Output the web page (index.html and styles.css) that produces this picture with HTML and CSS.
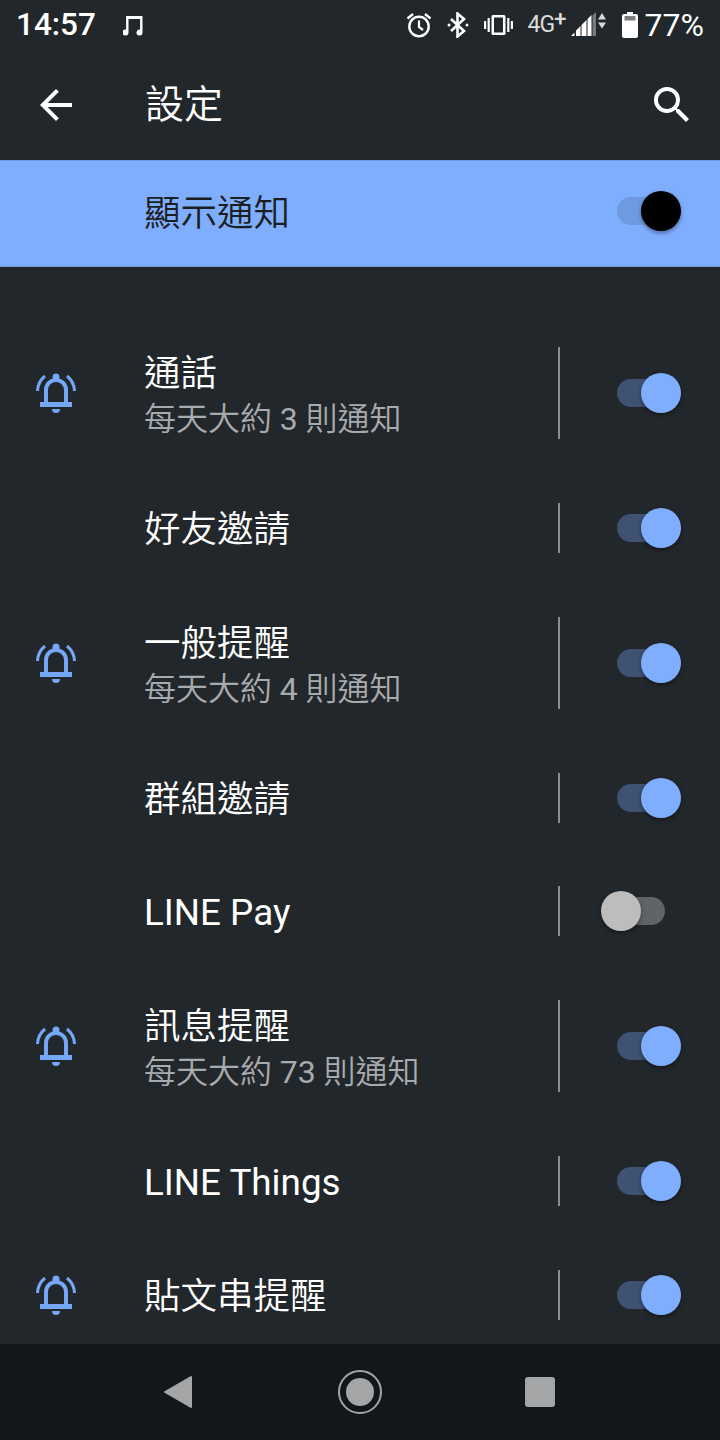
FILE: index.html
```html
<!DOCTYPE html>
<html lang="zh-Hant">

<head>
  <meta charset="UTF-8" />
  <title>設定</title>
  <link rel="stylesheet" href="styles.css">
</head>

<body>
  <!-- Status bar -->
  <div class="status-bar">
    <span class="clock">14:57</span>
    <svg class="ic-note" width="22" height="22" viewBox="0 0 22 22"><path d="M4 2h17v16.500a3 3 0 1 1-2.400-2.900V5H7v13.500a3 3 0 1 1-2.400-2.900V2z" fill="#fff" transform="translate(-1.500 0)"/></svg>
    <span class="status-right">
      <svg class="ic-alarm" width="26" height="26" viewBox="0 0 26 26" fill="none" stroke="#fff">
        <circle cx="13" cy="14.500" r="9.700" stroke-width="2.400"/>
        <path d="M13 8.500v6.500l4 3" stroke-width="2.200"/>
        <path d="M1.500 6.500L7 2M24.500 6.500L19 2" stroke-width="2.400"/>
      </svg>
      <svg class="ic-bt" width="22" height="26" viewBox="0 0 22 26" fill="none" stroke="#fff">
        <path d="M4 7l13 12-6.500 5.500V1.500L17 7 4 19" stroke-width="2.600"/>
        <circle cx="2" cy="13" r="1.500" fill="#fff" stroke="none"/>
        <circle cx="20" cy="13" r="1.500" fill="#fff" stroke="none"/>
      </svg>
      <svg class="ic-vib" width="29" height="20" viewBox="0 0 29 20" fill="#fff">
        <path d="M9 0h11a1.500 1.500 0 0 1 1.500 1.500v17A1.500 1.500 0 0 1 20 20H9a1.500 1.500 0 0 1-1.500-1.500v-17A1.500 1.500 0 0 1 9 0zm1 2.400v15.200h9V2.400h-9z"/>
        <rect x="3.600" y="3" width="2.200" height="14" rx=".5"/>
        <rect x="23.200" y="3" width="2.200" height="14" rx=".5"/>
        <rect x="0" y="6" width="2.200" height="8" rx=".5"/>
        <rect x="26.800" y="6" width="2.200" height="8" rx=".5"/>
      </svg>
      <span class="net">4G<sup>+</sup></span>
      <svg class="ic-signal" width="35" height="26" viewBox="0 0 35 26">
        <path d="M21.500 24V3.500L25 0v24z" fill="#77797b"/>
        <path d="M0 24l3.500-3.500V24zM5 24v-5.500l4.500-4.500v10zM10.500 24V13l5-5v16zM16.500 24V7l4-4v21z" fill="#fff"/>
        <path d="M31 1l4 6.500h-8zM31 16.500l4-6h-8z" fill="#d8d8d8"/>
      </svg>
      <svg class="ic-batt" width="16" height="26" viewBox="0 0 16 26">
        <path fill="#fff" d="M5 0h6v2h3a2 2 0 0 1 2 2v20a2 2 0 0 1-2 2H2a2 2 0 0 1-2-2V4a2 2 0 0 1 2-2h3z"/>
        <rect x="2.500" y="4" width="11" height="4.500" fill="#7c7e80"/>
      </svg>
      <span class="battery">77%</span>
    </span>
  </div>

  <!-- App bar -->
  <div class="app-bar">
    <svg class="back" width="48" height="48" viewBox="0 0 24 24"><path fill="#fff" d="M20 11H7.830l5.590-5.590L12 4l-8 8 8 8 1.410-1.410L7.830 13H20v-2z"/></svg>
    <span class="app-title">設定</span>
    <svg class="search" width="48" height="48" viewBox="0 0 24 24"><path fill="#fff" d="M15.500 14h-.790l-.280-.270A6.470 6.470 0 0 0 16 9.500 6.500 6.500 0 1 0 9.500 16c1.610 0 3.090-.590 4.230-1.570l.270.280v.790l5 4.990L20.490 19l-4.990-5zm-6 0C7.010 14 5 11.990 5 9.500S7.010 5 9.500 5 14 7.010 14 9.500 11.990 14 9.500 14z"/></svg>
  </div>

  <!-- Master toggle -->
  <div class="master">
    <span class="master-title">顯示通知</span>
    <span class="switch on master-switch"><i class="track"></i><i class="knob"></i></span>
  </div>

  <!-- Channels -->
  <div class="list">
    <div class="row tall">
      <svg class="bell" viewBox="0 0 48 48"><use href="#bell"/></svg>
      <div class="text two"><div class="title">通話</div><div class="sub">每天大約 <span class="num">3</span> 則通知</div></div>
      <i class="divider"></i>
      <span class="switch on"><i class="track"></i><i class="knob"></i></span>
    </div>
    <div class="row">
      <span class="bell"></span>
      <div class="text"><div class="title">好友邀請</div></div>
      <i class="divider"></i>
      <span class="switch on"><i class="track"></i><i class="knob"></i></span>
    </div>
    <div class="row tall">
      <svg class="bell" viewBox="0 0 48 48"><use href="#bell"/></svg>
      <div class="text two"><div class="title">一般提醒</div><div class="sub">每天大約 <span class="num">4</span> 則通知</div></div>
      <i class="divider"></i>
      <span class="switch on"><i class="track"></i><i class="knob"></i></span>
    </div>
    <div class="row">
      <span class="bell"></span>
      <div class="text"><div class="title">群組邀請</div></div>
      <i class="divider"></i>
      <span class="switch on"><i class="track"></i><i class="knob"></i></span>
    </div>
    <div class="row">
      <span class="bell"></span>
      <div class="text"><div class="title latin">LINE Pay</div></div>
      <i class="divider"></i>
      <span class="switch"><i class="track"></i><i class="knob"></i></span>
    </div>
    <div class="row tall">
      <svg class="bell" viewBox="0 0 48 48"><use href="#bell"/></svg>
      <div class="text two"><div class="title">訊息提醒</div><div class="sub">每天大約 <span class="num">73</span> 則通知</div></div>
      <i class="divider"></i>
      <span class="switch on"><i class="track"></i><i class="knob"></i></span>
    </div>
    <div class="row">
      <span class="bell"></span>
      <div class="text"><div class="title latin">LINE Things</div></div>
      <i class="divider"></i>
      <span class="switch on"><i class="track"></i><i class="knob"></i></span>
    </div>
    <div class="row">
      <svg class="bell" viewBox="0 0 48 48"><use href="#bell"/></svg>
      <div class="text"><div class="title">貼文串提醒</div></div>
      <i class="divider"></i>
      <span class="switch on"><i class="track"></i><i class="knob"></i></span>
    </div>
  </div>

  <!-- Nav bar -->
  <div class="nav-bar">
    <svg width="30" height="34" viewBox="0 0 30 34" class="nav-back"><path fill="#a4a5a7" stroke="#a4a5a7" stroke-width="2" stroke-linejoin="round" d="M28 2v30L2 17z"/></svg>
    <span class="nav-home"><i></i></span>
    <span class="nav-square"></span>
  </div>

  <!-- Bell symbol -->
  <svg class="defs" width="0" height="0">
    <symbol id="bell" viewBox="0 0 48 48">
      <g fill="none" stroke="#75a7f6">
        <path d="M14 34V21a10 10 0 0 1 20 0v13" stroke-width="4"/>
        <path d="M5.500 22A20 20 0 0 1 13 7M42.500 22A20 20 0 0 0 35 7" stroke-width="3"/>
      </g>
      <g fill="#75a7f6">
        <circle cx="24" cy="8" r="3.500"/>
        <rect x="8" y="33" width="32" height="5"/>
        <path d="M20 40h8a4 4 0 0 1-8 0z"/>
      </g>
    </symbol>
  </svg>
</body>

</html>
```

FILE: styles.css
```css
:root {
  --bg: #22272b;
  --accent: #80aeff;
  --nav: #14171a;
  --sans: Roboto, "Noto Sans CJK TC", sans-serif;
}

body {
  margin: 0;
  height: 1440px;
  overflow: hidden;
  display: flex;
  flex-direction: column;
  background: var(--bg);
  color: #fff;
  font-family: var(--sans);
}

i {
  display: block;
}

.defs {
  position: absolute;
}

/* status bar */
.status-bar {
  height: 52px;
  flex: none;
  box-sizing: border-box;
  display: flex;
  align-items: center;
  padding: 0 16px 2px 16px;
}

.clock {
  font-size: 31.5px;
  font-weight: 500;
  line-height: 48px;
}

.ic-note {
  margin-left: 27px;
}

.status-right {
  margin-left: auto;
  display: flex;
  align-items: center;
}

.ic-bt,
.ic-vib {
  margin-left: 15px;
}

.net {
  margin-left: 15px;
  width: 38px;
  font-size: 23px;
  letter-spacing: -1px;
  line-height: 30px;
  color: #dcdcdc;
  white-space: nowrap;
}

.net sup {
  font-size: 22px;
  font-weight: 500;
  line-height: 0;
  vertical-align: 6px;
}

.ic-signal {
  margin-left: 5px;
}

.ic-batt {
  margin-left: 16px;
}

.battery {
  margin-left: 7px;
  font-size: 32px;
  line-height: 48px;
}

/* app bar */
.app-bar {
  height: 108px;
  flex: none;
  box-sizing: border-box;
  display: flex;
  align-items: center;
  padding: 0 24px 2px 32px;
}

.app-title {
  margin-left: 65px;
  font-size: 39px;
  font-weight: 350;
  line-height: 50px;
}

.search {
  margin-left: auto;
}

/* master toggle */
.master {
  height: 107px;
  flex: none;
  box-sizing: border-box;
  display: flex;
  align-items: center;
  padding-left: 144px;
  background: var(--accent);
  border-top: 1px solid #6f9ae0;
  border-bottom: 1px solid #6f9ae0;
  color: #1c1f22;
}

.master-title {
  font-size: 36.5px;
  font-weight: 350;
  line-height: 50px;
}

.master-switch {
  width: 160px;
  margin-left: auto;
  margin-bottom: 5px;
}

/* channel rows */
.list {
  flex: 1;
  min-height: 0;
  overflow: hidden;
  padding-top: 48px;
}

.row {
  display: flex;
  align-items: stretch;
  padding: 31.9px 0;
}

.row.tall {
  padding: 32px 0;
}

.bell {
  flex: none;
  width: 48px;
  height: 48px;
  margin: auto 64px auto 32px;
}

.text {
  flex: 1;
  min-width: 0;
}

.title {
  font-size: 36.5px;
  font-weight: 350;
  line-height: 50px;
  padding-top: 2px;
  margin-bottom: -2px;
}

.title.latin {
  font-size: 36.8px;
  font-weight: 400;
}

.two .title {
  line-height: 46px;
  padding-top: 4px;
  margin-bottom: 0;
}

.sub {
  font-size: 32px;
  font-weight: 350;
  line-height: 46px;
  margin: -1px 0 -3px;
  color: #a8abad;
}

.num {
  font-weight: 400;
}

.divider {
  flex: none;
  width: 2px;
  background: #8a8c8e;
}

/* switches */
.switch {
  position: relative;
  flex: none;
  width: 160px;
  min-height: 50px;
  align-self: center;
}

.track {
  position: absolute;
  left: 57px;
  top: 50%;
  width: 48px;
  height: 28px;
  margin-top: -14px;
  border-radius: 14px;
  background: #5f6467;
}

.knob {
  position: absolute;
  left: 41px;
  top: 50%;
  width: 40px;
  height: 40px;
  margin-top: -20px;
  border-radius: 50%;
  background: #bdbdbd;
  box-shadow: 0 2px 4px rgba(0, 0, 0, 0.4);
}

.switch.on .knob {
  left: 81px;
  background: var(--accent);
}

.switch.on .track {
  background: #3f5272;
}

.master-switch.on .track {
  background: #709ae0;
}

.master-switch.on .knob {
  background: #000;
}

/* nav bar */
.nav-bar {
  height: 96px;
  flex: none;
  display: flex;
  align-items: center;
  background: var(--nav);
  padding-left: 163px;
}

.nav-home {
  margin-left: 145px;
  width: 44px;
  height: 44px;
  box-sizing: border-box;
  border: 2px solid #a4a5a7;
  border-radius: 50%;
  display: flex;
  align-items: center;
  justify-content: center;
}

.nav-home i {
  width: 28px;
  height: 28px;
  border-radius: 50%;
  background: #a4a5a7;
}

.nav-square {
  margin-left: 143px;
  width: 30px;
  height: 30px;
  border-radius: 3px;
  background: #a4a5a7;
}
```
